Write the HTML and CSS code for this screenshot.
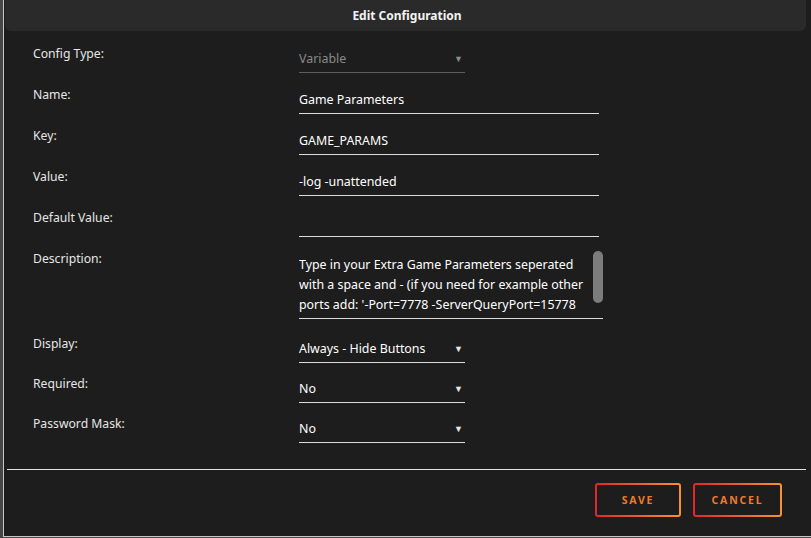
FILE: index.html
```html
<!DOCTYPE html>
<html lang="en">
<head>
  <meta charset="UTF-8">
  <meta name="viewport" content="width=device-width, initial-scale=1.0">
  <title>Edit Configuration</title>
  <link rel="stylesheet" href="styles.css">
</head>
<body>
  <div class="dialog">
    <header class="dialog-head">
      <h1>Edit Configuration</h1>
    </header>
    <form class="config-form">
      <div class="row">
        <label>Config Type:</label>
        <div class="field select disabled"><span>Variable</span><span class="arrow">&#9660;</span></div>
      </div>
      <div class="row">
        <label>Name:</label>
        <div class="field text">Game Parameters</div>
      </div>
      <div class="row">
        <label>Key:</label>
        <div class="field text">GAME_PARAMS</div>
      </div>
      <div class="row">
        <label>Value:</label>
        <div class="field text">-log -unattended</div>
      </div>
      <div class="row">
        <label>Default Value:</label>
        <div class="field text"></div>
      </div>
      <div class="row row-area">
        <label>Description:</label>
        <div class="field area">
          <span class="line">Type in your Extra Game Parameters seperated</span>
          <span class="line">with a space and - (if you need for example other</span>
          <span class="line">ports add: '-Port=7778 -ServerQueryPort=15778</span>
          <span class="thumb"></span>
        </div>
      </div>
      <div class="row row-tight">
        <label>Display:</label>
        <div class="field select"><span>Always - Hide Buttons</span><span class="arrow">&#9660;</span></div>
      </div>
      <div class="row row-tight">
        <label>Required:</label>
        <div class="field select"><span>No</span><span class="arrow">&#9660;</span></div>
      </div>
      <div class="row">
        <label>Password Mask:</label>
        <div class="field select"><span>No</span><span class="arrow">&#9660;</span></div>
      </div>
    </form>
    <footer class="dialog-foot">
      <button type="button" class="btn btn-save">SAVE</button>
      <button type="button" class="btn btn-cancel">CANCEL</button>
    </footer>
  </div>
</body>
</html>
```

FILE: styles.css
```css
body {
  margin: 0;
  padding: 0;
  background-color: #474747;
  font-family: "Noto Sans", "Open Sans", sans-serif;
  color: #e6e6e6;
}

.dialog {
  margin-left: 3px;
  height: 536px;
  border-left: 1px solid #c8c8c8;
  border-bottom: 1px solid #c8c8c8;
  background-color: #1d1d1d;
  display: flex;
  flex-direction: column;
}

.dialog-head {
  flex-shrink: 0;
  margin: 0 5px 0 1px;
  height: 31px;
  background-color: #2a2a2a;
  border-radius: 0 0 6px 6px;
  display: flex;
  align-items: center;
  justify-content: center;
}

.dialog-head h1 {
  margin: 0;
  padding-left: 3px;
  font-size: 12px;
  font-weight: 700;
  color: #f2f2f2;
}

.config-form {
  flex-shrink: 0;
  margin: 0 5px 0 3px;
  padding: 13px 0 14px 26px;
  border-bottom: 1px solid #e4e4e4;
}

.row {
  display: grid;
  grid-template-columns: 266px auto;
  align-items: start;
  margin-bottom: 12px;
}

.row-area {
  margin-bottom: 15px;
}

.row-tight {
  margin-bottom: 11px;
}

.row label {
  font-size: 12.2px;
  line-height: 20px;
  color: #e6e6e6;
}

.field {
  margin-top: 5px;
  font-size: 12.4px;
  line-height: 20px;
  padding-bottom: 3px;
  color: #ffffff;
  border-bottom: 1px solid #dcdcdc;
  box-sizing: border-box;
}

.text {
  width: 300px;
  height: 24px;
}

.select {
  width: 166px;
  height: 24px;
  display: flex;
  justify-content: space-between;
}

.select .arrow {
  font-size: 9px;
  padding-right: 2px;
  color: #e8e8e8;
}

.disabled {
  color: #8a8a8a;
  border-bottom-color: #5e5e5e;
}

.disabled .arrow {
  color: #8a8a8a;
}

.area {
  position: relative;
  width: 304px;
  height: 64px;
  margin-top: 6px;
}

.area .line {
  display: block;
  white-space: nowrap;
  overflow: hidden;
  width: 294px;
}

.area .thumb {
  position: absolute;
  right: 0;
  top: -4px;
  width: 10px;
  height: 52px;
  border-radius: 5px;
  background-color: #7c7c7c;
}

.dialog-foot {
  display: flex;
  justify-content: flex-end;
  gap: 12px;
  padding: 13px 29px 0 0;
}

.btn {
  height: 34px;
  padding: 0;
  font-family: "Noto Sans", sans-serif;
  font-size: 10.5px;
  font-weight: 700;
  letter-spacing: 1.8px;
  color: #f07a2a;
  border: 2px solid transparent;
  border-radius: 3px;
  background: linear-gradient(#1d1d1d, #1d1d1d) padding-box,
              linear-gradient(90deg, #e2262b, #f7932f) border-box;
  cursor: pointer;
}

.btn-save {
  width: 86px;
}

.btn-cancel {
  width: 89px;
}
```
